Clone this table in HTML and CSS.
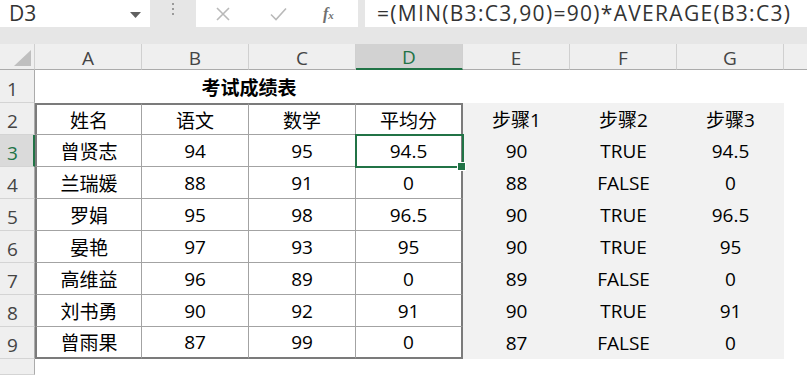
FILE: index.html
```html
<!DOCTYPE html>
<html lang="zh-CN">
<head>
<meta charset="utf-8">
<title>考试成绩表</title>
<link rel="stylesheet" href="styles.css">
</head>
<body>
<div class="app">
  <div class="bar">
    <div class="namebox">
      <span class="name">D3</span>
      <svg class="dd" width="11" height="6" viewBox="0 0 11 6"><path d="M0 0H11L5.5 6Z" fill="#606060"/></svg>
    </div>
    <div class="grip">
      <svg width="3" height="13" viewBox="0 0 3 13"><rect x="0" y="0" width="2" height="2" fill="#9a9a9a"/><rect x="0" y="5" width="2" height="2" fill="#9a9a9a"/><rect x="0" y="10" width="2" height="2" fill="#9a9a9a"/></svg>
    </div>
    <div class="btns">
      <svg class="ico" width="14" height="14" viewBox="0 0 14 14"><path d="M1 1L13 13M13 1L1 13" stroke="#b9b9b9" stroke-width="1.6"/></svg>
      <svg class="ico" width="17" height="14" viewBox="0 0 17 14"><path d="M1 7.5L6 12.5L16 1.5" stroke="#b9b9b9" stroke-width="1.6" fill="none"/></svg>
      <span class="fx">f<sub>x</sub></span>
    </div>
    <div class="formula"><span class="ftext">=(MIN(B3:C3,90)=90)*AVERAGE(B3:C3)</span></div>
  </div>

  <div class="sheet">
    <div class="corner"><svg width="17" height="16" viewBox="0 0 17 16"><path d="M17 0V16H0Z" fill="#bfbfbf"/></svg></div>
    <div class="ch">A</div><div class="ch">B</div><div class="ch">C</div><div class="ch sel">D</div><div class="ch">E</div><div class="ch">F</div><div class="ch">G</div><div class="ch last"></div>

    <div class="rh">1</div>
    <div class="title">考试成绩表</div>
    <div class="c"></div><div class="c"></div><div class="c"></div><div class="c"></div>

    <div class="rh">2</div>
    <div class="t l top">姓名</div><div class="t top">语文</div><div class="t top">数学</div><div class="t r top">平均分</div>
    <div class="g">步骤1</div><div class="g">步骤2</div><div class="g">步骤3</div><div class="c"></div>

    <div class="rh rsel">3</div>
    <div class="t l">曾贤志</div><div class="t">94</div><div class="t">95</div><div class="t r active">94.5</div>
    <div class="g">90</div><div class="g">TRUE</div><div class="g">94.5</div><div class="c"></div>

    <div class="rh">4</div>
    <div class="t l">兰瑞媛</div><div class="t">88</div><div class="t">91</div><div class="t r">0</div>
    <div class="g">88</div><div class="g">FALSE</div><div class="g">0</div><div class="c"></div>

    <div class="rh">5</div>
    <div class="t l">罗娟</div><div class="t">95</div><div class="t">98</div><div class="t r">96.5</div>
    <div class="g">90</div><div class="g">TRUE</div><div class="g">96.5</div><div class="c"></div>

    <div class="rh">6</div>
    <div class="t l">晏艳</div><div class="t">97</div><div class="t">93</div><div class="t r">95</div>
    <div class="g">90</div><div class="g">TRUE</div><div class="g">95</div><div class="c"></div>

    <div class="rh">7</div>
    <div class="t l">高维益</div><div class="t">96</div><div class="t">89</div><div class="t r">0</div>
    <div class="g">89</div><div class="g">FALSE</div><div class="g">0</div><div class="c"></div>

    <div class="rh">8</div>
    <div class="t l">刘书勇</div><div class="t">90</div><div class="t">92</div><div class="t r">91</div>
    <div class="g">90</div><div class="g">TRUE</div><div class="g">91</div><div class="c"></div>

    <div class="rh">9</div>
    <div class="t l bot">曾雨果</div><div class="t bot">87</div><div class="t bot">99</div><div class="t r bot">0</div>
    <div class="g">87</div><div class="g">FALSE</div><div class="g">0</div><div class="c"></div>

    <div class="rh"></div>
    <div class="c"></div><div class="c"></div><div class="c"></div><div class="c"></div><div class="c"></div><div class="c"></div><div class="c"></div><div class="c"></div>
  </div>
</div>
</body>
</html>
```

FILE: styles.css
```css
* { box-sizing: border-box; }
html, body { margin: 0; padding: 0; }
body {
  width: 807px;
  height: 375px;
  overflow: hidden;
  background: #ffffff;
  font-family: "Open Sans", "Noto Sans CJK SC", sans-serif;
}
.app {
  background: #e6e6e6;
  height: 375px;
  display: flex;
  flex-direction: column;
}
.bar {
  display: flex;
  height: 27px;
  margin-bottom: 17px;
}
.namebox {
  width: 150px;
  background: #fff;
  display: flex;
  align-items: center;
  justify-content: space-between;
  padding: 0 9px 0 9px;
}
.name {
  font-size: 21px;
  line-height: 27px;
  color: #333;
}
.dd { margin-top: 2px; }
.grip {
  width: 46px;
  display: flex;
  justify-content: center;
  align-items: flex-start;
  padding-top: 3px;
}
.btns {
  width: 162px;
  background: #fff;
  display: flex;
  align-items: center;
  padding-left: 20px;
}
.btns .ico { margin-right: 40px; }
.btns .ico + .ico { margin-right: 36px; }
.fx {
  font-family: "Liberation Serif", serif;
  font-style: italic;
  font-size: 16px;
  color: #707070;
  font-weight: bold;
}
.fx sub { font-size: 11px; vertical-align: 0; }
.formula {
  margin-left: 7px;
  flex: 1;
  background: #fff;
  padding-left: 12px;
  display: flex;
  align-items: center;
}
.ftext {
  font-size: 21px;
  letter-spacing: 1.3px;
  line-height: 27px;
  color: #333;
  white-space: nowrap;
}

.sheet {
  flex: 1;
  background: #fff;
  display: grid;
  grid-template-columns: 35px repeat(7, 107px) 1fr;
  grid-template-rows: 26px 33px repeat(8, 32px) 1fr;
  font-size: 19px;
  color: #000;
}
.sheet > div {
  display: flex;
  align-items: center;
  justify-content: center;
  white-space: nowrap;
}
.corner {
  background: #efefef;
  border-right: 1px solid #d0d0d0;
  border-bottom: 1px solid #ababab;
  align-items: flex-end !important;
  justify-content: flex-end !important;
  padding: 0 3px 3px 0;
}
.ch {
  background: #efefef;
  border-right: 1px solid #d0d0d0;
  border-bottom: 1px solid #ababab;
  color: #444;
  font-size: 19px;
  padding-top: 2px;
}
.ch.sel {
  background: #d2d2d2;
  color: #217346;
  border-bottom: 2px solid #217346;
}
.ch.last { border-right: none; }
.rh {
  background: #efefef;
  border-right: 1px solid #ababab;
  border-bottom: 1px solid #d4d4d4;
  color: #444;
  font-size: 19px;
  justify-content: flex-start !important;
  align-items: flex-end !important;
  padding: 0 0 0 7px;
  line-height: 26px;
}
.rh.rsel {
  background: #dadada;
  color: #217346;
  border-right: 2px solid #217346;
}
.title {
  grid-column: span 4;
  font-weight: bold;
}
.t {
  border-right: 1px solid #a3a3a3;
  border-bottom: 1px solid #a3a3a3;
}
.t.l { border-left: 2px solid #7b7b7b; }
.t.r { border-right: 2px solid #7b7b7b; }
.t.top { border-top: 2px solid #7b7b7b; }
.t.bot { border-bottom: 2px solid #7b7b7b; }
.g {
  background: #f2f2f2;
}
.active {
  position: relative;
  outline: 2px solid #217346;
  outline-offset: -1px;
}
.active::after {
  content: "";
  position: absolute;
  right: -5px;
  bottom: -5px;
  width: 7px;
  height: 7px;
  background: #217346;
  border: 1px solid #fff;
}
```
